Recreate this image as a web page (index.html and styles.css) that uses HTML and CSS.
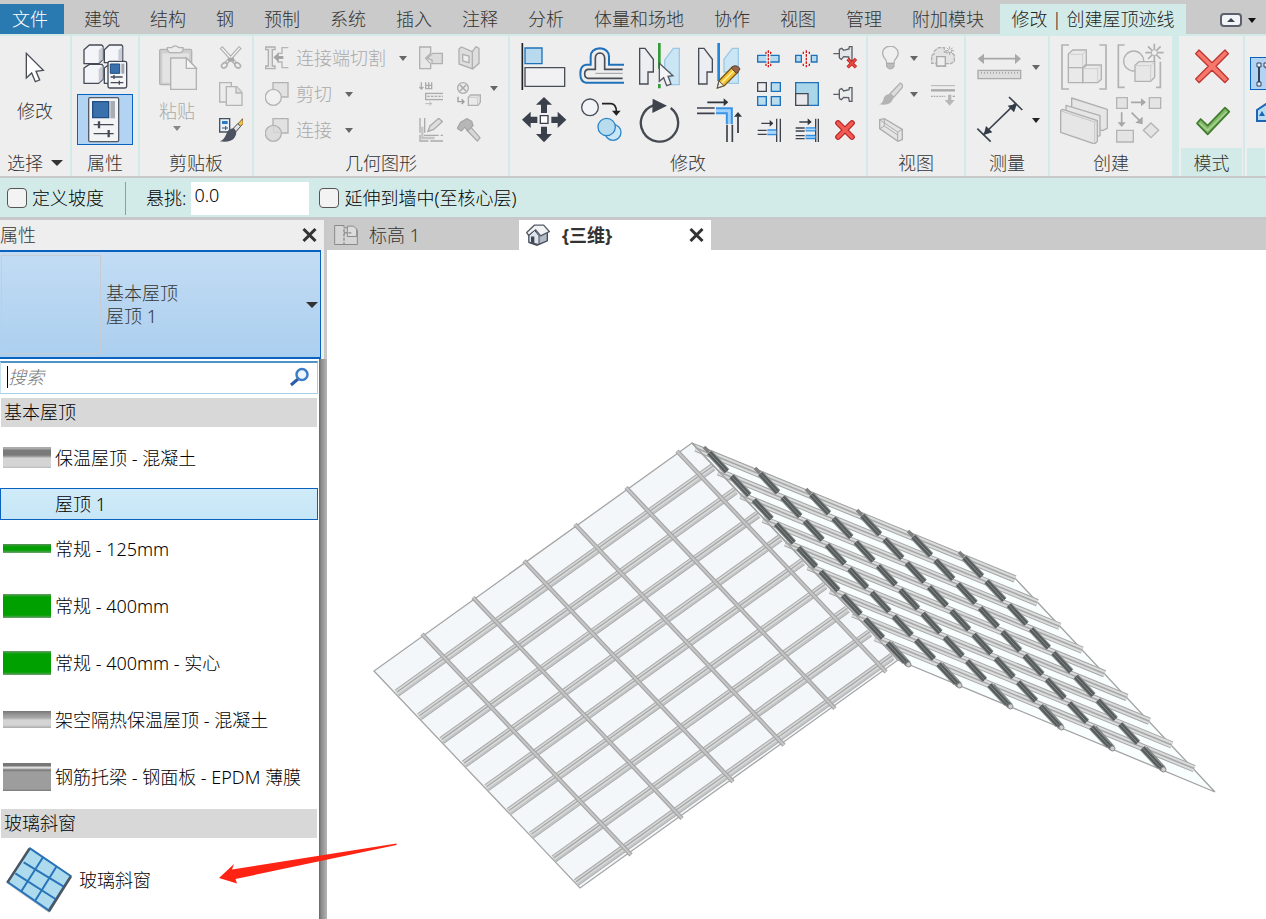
FILE: index.html
```html
<!DOCTYPE html>
<html lang="zh-CN">
<head>
<meta charset="utf-8">
<meta name="viewport" content="width=device-width, initial-scale=1">
<title>修改 | 创建屋顶迹线</title>
<link rel="stylesheet" href="styles.css">
</head>
<body>
<div class="app">
<nav class="tabs">
  <button class="tab tab-file">文件</button>
  <button class="tab">建筑</button>
  <button class="tab">结构</button>
  <button class="tab">钢</button>
  <button class="tab">预制</button>
  <button class="tab">系统</button>
  <button class="tab">插入</button>
  <button class="tab">注释</button>
  <button class="tab">分析</button>
  <button class="tab">体量和场地</button>
  <button class="tab">协作</button>
  <button class="tab">视图</button>
  <button class="tab">管理</button>
  <button class="tab">附加模块</button>
  <button class="tab tab-active">修改 | 创建屋顶迹线</button>
  <button class="collapse" aria-label="最小化功能区">
    <svg width="36" height="14" viewBox="0 0 36 14"><rect x="1" y="1" width="20" height="12" rx="3" fill="#f2f4f8" stroke="#5b606b" stroke-width="2"/><path d="M7 9l4-4 4 4z" fill="#3c4350"/><path d="M28 5h8l-4 5z" fill="#111"/></svg>
  </button>
</nav>

<div class="ribbon">
  <section class="panel p-select">
    <div class="body">
      <button class="big-btn"><svg class="cursor" viewBox="69 147 72 105"><path d="M79 160V234L95 219L106 245L119 240L108 214L130 211Z" fill="#fff" stroke="#4a4d57" stroke-width="4"/></svg>修改</button>
    </div>
    <button class="title">选择<i class="caret caret-lg"></i></button>
  </section>

  <section class="panel p-props">
    <div class="body stack">
      <button class="ico" aria-label="类型属性"><svg class="i48" viewBox="243 129 144 144"><g fill="#f4f5f8" stroke="#454a57" stroke-width="4" stroke-linejoin="round"><path d="M252 149L268 135H305L309 139V178L296 191H252Z"/><path d="M313 149L328 135H365L368 139V188H313Z"/><path d="M252 204L268 193H305L309 197V238L296 250H252Z"/><path d="M313 204L328 193H340V250H313Z"/></g><g fill="#c9ccd5"><path d="M296 151L308 140V178L296 190Z"/><path d="M355 151L367 140V180H355Z"/><path d="M296 207L308 197V238L296 249Z"/></g><rect x="324" y="184" width="56" height="80" rx="5" fill="#f4f5f7" stroke="#454a57" stroke-width="4"/><path d="M331 192h28v28h-28z" fill="#3a70ab" stroke="#214d80" stroke-width="3"/><path d="M364 191h9v30h-9z" fill="#a4a6ac"/><path d="M332 231h36M342 225v12M332 248h38M358 242v12" stroke="#454a57" stroke-width="4"/></svg></button>
      <button class="ico ico-on" aria-label="属性"><svg class="i48" viewBox="243 288 144 144"><rect x="266" y="293" width="90" height="132" rx="4" fill="#f3f4f6" stroke="#555a64" stroke-width="4"/><path d="M278 305h48v48h-48z" fill="#3a70ab" stroke="#214d80" stroke-width="4"/><path d="M331 303h14v52h-14z" fill="#aaacb3"/><path d="M281 374h60M281 401h60" stroke="#454a57" stroke-width="4"/><path d="M297 364v21M326 390v22" stroke="#454a57" stroke-width="7"/></svg></button>
    </div>
    <div class="title">属性</div>
  </section>

  <section class="panel p-clip">
    <div class="body">
      <button class="big-btn off paste"><svg class="i48" viewBox="462 129 144 144"><rect x="482" y="148" width="96" height="106" rx="4" fill="#cfcfcf" stroke="#b2b2b2" stroke-width="4"/><path d="M490 160h80v88h-80z" fill="#e3e3e3"/><path d="M505 151V143H518Q528 132 540 143H552V152L545 158H512Z" fill="#ececec" stroke="#b2b2b2" stroke-width="4"/><path d="M515 174H562L592 205V268H515Z" fill="#ececec" stroke="#b2b2b2" stroke-width="4"/><path d="M562 174V205H592Z" fill="#f6f6f6" stroke="#b2b2b2" stroke-width="4"/></svg>粘贴<i class="caret mute"></i></button>
      <div class="small-grid cols-1">
        <button class="ico" aria-label="剪切到剪贴板"><svg class="i24" viewBox="657 138 72 72"><path d="M663 142L706 190M721 142L678 190" stroke="#b0b0b0" stroke-width="11"/><path d="M665 144L704 187M719 144L680 187" stroke="#f4f4f4" stroke-width="4"/><ellipse cx="673" cy="196" rx="9" ry="7" transform="rotate(-40 673 196)" fill="none" stroke="#b0b0b0" stroke-width="5"/><ellipse cx="713" cy="196" rx="9" ry="7" transform="rotate(40 713 196)" fill="none" stroke="#b0b0b0" stroke-width="5"/><path d="M684 173h18v12h-18z" fill="#a9a9a9"/></svg></button>
        <button class="ico" aria-label="复制到剪贴板"><svg class="i24" viewBox="657 246 72 72"><path d="M659 248H694V306H659Z" fill="#ececec" stroke="#b4b4b4" stroke-width="4"/><path d="M679 260H710L726 277V316H679Z" fill="#ececec" stroke="#b4b4b4" stroke-width="4"/><path d="M708 260V279H726" fill="#ddd" stroke="#b4b4b4" stroke-width="4"/></svg></button>
        <button class="ico" aria-label="匹配类型属性"><svg class="i24" viewBox="657 354 72 72"><path d="M659 356h30v40h-30z" fill="#e5f0fa" stroke="#4a505c" stroke-width="4"/><path d="M666 363h17v9h-17z" fill="#2b7ac4"/><path d="M666 384h18M677 378v12" stroke="#4a505c" stroke-width="3"/><path d="M728 356L700 387L708 394L730 370Z" fill="#f0c24b" stroke="#77602a" stroke-width="3"/><path d="M713 371L697 388L706 397L722 379Z" fill="#dfe2e6" stroke="#555" stroke-width="3"/><path d="M702 385Q684 385 678 404Q672 419 659 424Q690 429 703 414Q711 403 708 394Z" fill="#4c5260"/></svg></button>
      </div>
    </div>
    <div class="title">剪贴板</div>
  </section>

  <section class="panel p-geom">
    <div class="body">
      <div class="rows">
        <button class="row-btn"><svg class="i24" viewBox="45 138 72 72"><path d="M47 141H75V149H67V198H75V206H47V198H55V149H47Z" fill="#e6e6e6" stroke="#b0b0b0" stroke-width="4"/><path d="M115 143H96V160H84V186H96V203H115" fill="none" stroke="#b5b5b5" stroke-width="4"/><path d="M70 172L86 158V168H100V177H86V187Z" fill="#a4a4a4"/></svg>连接端切割<i class="caret"></i></button>
        <button class="row-btn"><svg class="i24" viewBox="45 246 72 72"><path d="M69 248h45v43h-45z" fill="#e2e2e2" stroke="#b2b2b2" stroke-width="4"/><circle cx="70" cy="292" r="24" fill="#f0f0f0" stroke="#b2b2b2" stroke-width="4"/></svg>剪切<i class="caret"></i></button>
        <button class="row-btn"><svg class="i24" viewBox="45 354 72 72"><path d="M69 356h45v43h-45z" fill="#e2e2e2" stroke="#b2b2b2" stroke-width="4"/><circle cx="70" cy="400" r="24" fill="#dcdcdc" stroke="#b2b2b2" stroke-width="4"/><path d="M71 380V397H90" fill="none" stroke="#cfcfcf" stroke-width="3"/></svg>连接<i class="caret"></i></button>
      </div>
      <div class="small-grid cols-2">
        <button class="ico" aria-label="连接屋顶"><svg class="i24" viewBox="507 138 72 72"><path d="M509 141H542V160L527 175L542 191V206H509Z" fill="#e8e8e8" stroke="#b0b0b0" stroke-width="4"/><path d="M577 160V191H546V180L532 175L548 160Z" fill="#dcdcdc" stroke="#b0b0b0" stroke-width="4"/></svg></button>
        <button class="ico" aria-label="墙洞口"><svg class="i24" viewBox="621 138 72 72"><path d="M627 147L634 141L667 155L678 140L687 145V190L668 207L627 192Z" fill="#dedede" stroke="#b0b0b0" stroke-width="4"/><path d="M667 155V206M638 163L657 168V188L638 183Z" fill="#eee" stroke="#b0b0b0" stroke-width="4"/></svg></button>
        <button class="ico" aria-label="梁连接"><svg class="i24" viewBox="507 246 72 72"><path d="M514 247V267M508 261L514 267L520 261M527 247V266H545V247M536 247V266M527 256H545" fill="none" stroke="#ababab" stroke-width="4"/><path d="M579 280H527V299H579" fill="#e9e9e9" stroke="#ababab" stroke-width="4"/><path d="M532 289H579" stroke="#ababab" stroke-width="4" stroke-dasharray="7 4"/><path d="M526 311H545M538 305L545 311L538 317" fill="none" stroke="#bababa" stroke-width="3"/></svg></button>
        <button class="ico" aria-label="拆分面"><svg class="i24" viewBox="621 246 72 72"><circle cx="639" cy="264" r="16" fill="#ececec" stroke="#ababab" stroke-width="4"/><path d="M630 255L648 273M648 255L630 273" stroke="#ababab" stroke-width="5"/><path d="M624 290V305H641M635 298L642 305L635 312" fill="none" stroke="#9c9c9c" stroke-width="4"/><path d="M655 292L662 285H691V307L684 316H655Z" fill="#e9e9e9" stroke="#b0b0b0" stroke-width="4"/><path d="M655 292H683V315M683 292L690 286" fill="none" stroke="#cacaca" stroke-width="3"/></svg></button>
        <button class="ico" aria-label="墙连接"><svg class="i24" viewBox="507 354 72 72"><path d="M510 354V423H579M524 354V406H579" fill="none" stroke="#ababab" stroke-width="4" stroke-dasharray="44 6"/><path d="M517 380V414H554" fill="none" stroke="#c4c4c4" stroke-width="7"/><path d="M534 394L540 378L566 355L577 365L550 389Z" fill="#dedede" stroke="#ababab" stroke-width="4"/></svg></button>
        <button class="ico" aria-label="拆除"><svg class="i24" viewBox="621 354 72 72"><path d="M661 380L690 413L682 423L650 390Z" fill="#d8d8d8" stroke="#ababab" stroke-width="4"/><path d="M622 385L632 367L651 356L665 364L669 377L654 392L644 382L634 393Z" fill="#b7b7b7" stroke="#a6a6a6" stroke-width="4"/></svg></button>
      </div>
      <div class="caret-col"><i class="caret"></i></div>
    </div>
    <div class="title">几何图形</div>
  </section>

  <section class="panel p-modify">
    <div class="body">
      <div class="big-grid cols-4">
        <button class="ico" aria-label="对齐"><svg class="i48" viewBox="30 129 144 144"><path d="M37 129V270" stroke="#222" stroke-width="5"/><path d="M45 144h51v47h-51z" fill="#b7daee" stroke="#1f71ba" stroke-width="4"/><path d="M45 203h119v56h-119z" fill="#f1f1f4" stroke="#4a4e59" stroke-width="4"/></svg></button>
        <button class="ico" aria-label="偏移"><svg class="i48" viewBox="207 129 144 144"><g fill="none"><path d="M342 194H297V170Q296 147 270 145Q242 147 242 170V194H228Q211 196 211 221Q211 246 228 248H342" stroke="#1f71ba" stroke-width="6"/><path d="M338 208H284V174Q283 160 270 159Q256 160 256 174V208H234Q224 210 224 221Q224 233 234 235H338" stroke="#4a4e59" stroke-width="5"/><path d="M256 220H338" stroke="#9a9ca2" stroke-width="3"/></g></svg></button>
        <button class="ico" aria-label="镜像 - 拾取轴"><svg class="i48" viewBox="384 129 144 144"><path d="M389 145H405L430 178V216H414V252H389Z" fill="#eceef2" stroke="#474b56" stroke-width="4"/><path d="M508 145H490L464 180V216H480V254H508Z" fill="#cae6f5" stroke="#9ccae6" stroke-width="4"/><path d="M448 129V206M448 252V265" stroke="#339b3a" stroke-width="8"/><path d="M448 190V244L461 233L470 257L483 252L474 229L489 227Z" fill="#f4f4f6" stroke="#555963" stroke-width="4"/></svg></button>
        <button class="ico" aria-label="镜像 - 绘制轴"><svg class="i48" viewBox="561 129 144 144"><path d="M566 145H582L607 178V216H591V252H566Z" fill="#eceef2" stroke="#474b56" stroke-width="4"/><path d="M685 145H667L642 178V216H657V250H685Z" fill="#cae6f5" stroke="#9ccae6" stroke-width="4"/><path d="M626 129V243" stroke="#2386dd" stroke-width="8"/><path d="M622 264L627 242L667 201L684 216L643 257Z" fill="#f4c334" stroke="#76581d" stroke-width="4"/><path d="M635 249L674 209" stroke="#fff0a0" stroke-width="4"/><path d="M664 204L670 198Q684 195 690 207L680 221Z" fill="#98664a" stroke="#5d3a25" stroke-width="3"/><path d="M622 264L627 243L642 257Z" fill="#f8eed6" stroke="#555" stroke-width="3"/></svg></button>
        <button class="ico" aria-label="移动"><svg class="i48" viewBox="30 288 144 144"><path fill="#3b414c" d="M102 291L126 314H111V339H93V314H78ZM102 427L78 402H93V380H111V402H126ZM36 359L62 335V350H82V369H62V384ZM169 359L143 335V350H124V369H143V384Z"/><path d="M91 347h23v23h-23z" fill="#fff" stroke="#3b414c" stroke-width="4"/></svg></button>
        <button class="ico" aria-label="复制"><svg class="i48" viewBox="207 288 144 144"><circle cx="240" cy="322" r="25" fill="#f3f4f7" stroke="#4a4e59" stroke-width="4"/><path d="M276 311H303Q319 312 319 335" fill="none" stroke="#222" stroke-width="5"/><path d="M306 332H332L319 347Z" fill="#222"/><circle cx="309" cy="397" r="24" fill="#cbe7f7" stroke="#2e86ca" stroke-width="4"/><circle cx="290" cy="381" r="26" fill="#b8dcee" stroke="#2e86ca" stroke-width="4"/></svg></button>
        <button class="ico" aria-label="旋转"><svg class="i48" viewBox="384 288 144 144"><path d="M430 316A56 56 0 1 0 482 324" fill="none" stroke="#454952" stroke-width="7"/><path d="M428 296L471 317L427 339Z" fill="#3d424d"/></svg></button>
        <button class="ico" aria-label="修剪/延伸为角"><svg class="i48" viewBox="561 288 144 144"><path d="M561 324H614M561 340H614M651 374V426M667 374V426" stroke="#3d414c" stroke-width="5"/><path d="M618 332H658V372" fill="none" stroke="#3a94e5" stroke-width="21"/><path d="M618 332H658V372" fill="none" stroke="#9fd2ff" stroke-width="9"/><path d="M592 307H643M684 399V349" stroke="#30343d" stroke-width="5"/><path d="M641 295L655 307L641 319ZM672 350L684 336L696 350Z" fill="#30343d"/></svg></button>
      </div>
      <div class="small-grid cols-3">
        <button class="ico" aria-label="拆分图元"><svg class="i24" viewBox="741 138 72 72"><path d="M743 166h64v20h-64z" fill="#b5daef" stroke="#1f71ba" stroke-width="4"/><path d="M775 151V202" stroke="#eee" stroke-width="12"/><path d="M775 151V202M768 155V162M768 191V198M782 155V162M782 191V198" stroke="#d01c1c" stroke-width="4" stroke-dasharray="8 3"/></svg></button>
        <button class="ico" aria-label="用间隙拆分"><svg class="i24" viewBox="855 138 72 72"><path d="M857 166h17v20h-17zM904 166h17v20h-17z" fill="#b5daef" stroke="#1f71ba" stroke-width="4"/><path d="M889 151V202M880 155V162M880 191V198M898 155V162M898 191V198" stroke="#d01c1c" stroke-width="4" stroke-dasharray="8 3"/></svg></button>
        <button class="ico" aria-label="解锁"><svg class="i24" viewBox="969 138 72 72"><path d="M970 161H987M988 148V174M988 148L995 145L1001 151L1017 147L1018 140H1026V182H1018L1016 171L1001 170L994 178L988 174" fill="#e4e5e8" stroke="#5b5e66" stroke-width="4"/><path d="M1013 177L1038 202M1038 177L1013 202" stroke="#b92222" stroke-width="10"/><path d="M1013 177L1038 202M1038 177L1013 202" stroke="#ee4b43" stroke-width="5"/></svg></button>
        <button class="ico" aria-label="阵列"><svg class="i24" viewBox="741 246 72 72"><path d="M743 248h26v26h-26z" fill="#ededf0" stroke="#444853" stroke-width="4"/><path d="M784 248h27v26h-27zM743 290h26v26h-26zM784 290h27v26h-27z" fill="#b9dcef" stroke="#1f71ba" stroke-width="4"/></svg></button>
        <button class="ico" aria-label="缩放"><svg class="i24" viewBox="855 246 72 72"><path d="M857 248h68v68h-68z" fill="#a9d6e9" stroke="#1f71ba" stroke-width="4"/><path d="M857 281h37v35h-37z" fill="#e9e9ed" stroke="#444853" stroke-width="4"/></svg></button>
        <button class="ico" aria-label="锁定"><svg class="i24" viewBox="969 246 72 72"><path d="M970 283H987M988 269V296M988 269L995 266L1001 273L1017 269L1018 263H1026V304H1018L1016 293L1001 292L994 299L988 296" fill="#eceded" stroke="#5b5e66" stroke-width="4"/></svg></button>
        <button class="ico" aria-label="修剪/延伸单个图元"><svg class="i24" viewBox="741 354 72 72"><path d="M800 356V426M811 356V426M754 370H784M743 391H770M743 403H770" stroke="#3d414c" stroke-width="4"/><path d="M779 360L790 370L779 380Z" fill="#30343d"/><path d="M772 390H799M772 403H799" stroke="#2f8fe4" stroke-width="5"/><path d="M772 397H799" stroke="#a8d7ff" stroke-width="8"/></svg></button>
        <button class="ico" aria-label="修剪/延伸多个图元"><svg class="i24" viewBox="855 354 72 72"><path d="M917 356V426M925 356V426M868 366H898M857 384H884M857 393H884M857 407H884M857 416H884" stroke="#3d414c" stroke-width="4"/><path d="M893 355L905 366L893 376Z" fill="#30343d"/><path d="M887 388H916M887 411H916" stroke="#2f8fe4" stroke-width="13"/><path d="M887 388H916M887 411H916" stroke="#a8d7ff" stroke-width="5"/></svg></button>
        <button class="ico" aria-label="删除"><svg class="i24" viewBox="969 354 72 72"><path d="M984 369L1026 411M1026 369L984 411" stroke="#b62525" stroke-width="17" stroke-linecap="round"/><path d="M984 369L1026 411M1026 369L984 411" stroke="#f25b54" stroke-width="10" stroke-linecap="round"/></svg></button>
      </div>
    </div>
    <div class="title">修改</div>
  </section>

  <section class="panel p-view">
    <div class="body">
      <div class="rows">
        <button class="row-btn tight" aria-label="在视图中隐藏"><svg class="i24" viewBox="57 138 72 72"><path d="M80 190Q80 180 73 174Q64 160 71 148Q79 138 91 138Q105 139 112 150Q118 162 109 174Q102 180 102 190Z" fill="#efefef" stroke="#b0b0b0" stroke-width="4"/><path d="M80 190h22v11q-11 12-22 0z" fill="#bcbcbc" stroke="#a9a9a9" stroke-width="3"/></svg><i class="caret"></i></button>
        <button class="row-btn tight" aria-label="替换视图中的图形"><svg class="i24" viewBox="57 246 72 72"><path d="M121 249Q130 253 127 262L101 292L90 281Z" fill="#dcdcdc" stroke="#b0b0b0" stroke-width="4"/><path d="M89 282Q73 283 70 299Q67 310 57 313Q86 318 96 303Q101 296 100 292Z" fill="#b3b3b3"/></svg><i class="caret"></i></button>
        <button class="row-btn tight" aria-label="选择框"><svg class="i24" viewBox="57 354 72 72"><path d="M59 359L73 356L127 388V419L114 424L59 386Z" fill="#e4e4e4" stroke="#adadad" stroke-width="4"/><path d="M59 359L113 396V423M113 396L127 388M73 357V378L113 405M73 378L60 386" fill="none" stroke="#adadad" stroke-width="3"/></svg></button>
      </div>
      <div class="small-grid cols-1">
        <button class="ico" aria-label="置换图元"><svg class="i24" viewBox="213 138 72 72"><path d="M215 167L223 160V153L236 143H253V156H274L283 166V184L273 191H257V198H229V190H215Z" fill="#e3e3e3" stroke="#b0b0b0" stroke-width="4" stroke-dasharray="12 3"/><path d="M230 170h26v28h-26z" fill="#eee" stroke="#a9a9a9" stroke-width="4"/><path d="M269 139V165M256 152H282M260 143L278 161M278 143L260 161" stroke="#aaa" stroke-width="3"/><circle cx="269" cy="152" r="4" fill="#eee"/></svg></button>
        <button class="ico" aria-label="线处理"><svg class="i24" viewBox="213 246 72 72"><path d="M213 257H285" stroke="#b4b4b4" stroke-width="3"/><path d="M213 271H285" stroke="#aaa" stroke-width="7"/><path d="M213 289H256" stroke="#a8a8a8" stroke-width="4" stroke-dasharray="5 3"/><path d="M264 284h10v16h10l-15 17-15-17h10z" fill="#b7b7b7"/><path d="M278 289h7" stroke="#a8a8a8" stroke-width="4"/></svg></button>
      </div>
    </div>
    <div class="title">视图</div>
  </section>

  <section class="panel p-measure">
    <div class="body stack">
      <button class="row-btn tight" aria-label="测量"><svg class="i48" viewBox="345 129 144 144"><path d="M364 176H470" stroke="#a8a8a8" stroke-width="5"/><path d="M353 176L372 161V192ZM483 176L465 161V192Z" fill="#a8a8a8"/><path d="M354 211h128v25h-128z" fill="#ddd" stroke="#aaa" stroke-width="4"/><path d="M363 218H476" stroke="#aaa" stroke-width="6" stroke-dasharray="3 6"/></svg><i class="caret"></i></button>
      <button class="row-btn tight" aria-label="对齐尺寸标注"><svg class="i48" viewBox="345 288 144 144"><path d="M369 405L466 311" stroke="#3d4350" stroke-width="5"/><path d="M352 386L392 425M447 291L487 330" stroke="#3d4350" stroke-width="5"/><path d="M371 405L378 378L397 397ZM471 312L443 317L462 337Z" fill="#333b48"/></svg><i class="caret dark"></i></button>
    </div>
    <div class="title">测量</div>
  </section>

  <section class="panel p-create">
    <div class="body">
      <div class="big-grid cols-2 wide">
        <button class="ico" aria-label="创建部件"><svg class="i48" viewBox="600 129 144 144"><path d="M627 135H606V267H627M718 135H738V267H718" fill="none" stroke="#b2b2b2" stroke-width="5"/><g fill="#e9e9e9" stroke="#b2b2b2" stroke-width="4"><path d="M625 162L638 150H679V192L668 203H625Z"/><path d="M668 205L681 195H724V238L713 248H668Z"/><path d="M625 203H668V248H625Z"/></g><path d="M628 163H668V201M670 206H713V245M668 163L678 151M713 206L723 196" fill="none" stroke="#cfcfcf" stroke-width="3"/></svg></button>
        <button class="ico" aria-label="创建组"><svg class="i48" viewBox="768 129 144 144"><path d="M794 135H775V262H794M888 262H901V185" fill="none" stroke="#b2b2b2" stroke-width="5"/><circle cx="821" cy="183" r="30" fill="#ececec" stroke="#b2b2b2" stroke-width="4"/><path d="M825 196L837 185H884V232L872 244H825Z" fill="#e7e7e7" stroke="#b2b2b2" stroke-width="4"/><path d="M827 197H872V242M872 197L883 187" fill="none" stroke="#cfcfcf" stroke-width="3"/><path d="M883 131V185M856 158H911M864 139L902 177M902 139L864 177" stroke="#b0b0b0" stroke-width="5"/><circle cx="883" cy="158" r="9" fill="#efefef" stroke="#b0b0b0" stroke-width="3"/></svg></button>
        <button class="ico" aria-label="创建零件"><svg class="i48" viewBox="600 288 144 144"><g fill="#e6e6e6" stroke="#b0b0b0" stroke-width="4" stroke-linejoin="round"><path d="M635 294L742 328V385L727 392L635 358Z"/><path d="M618 316L720 347V407L704 412L618 375Z"/><path d="M602 332L608 328L712 362V424L704 432L602 397Z"/></g><path d="M603 333L704 366V430M704 366L711 363" fill="none" stroke="#c6c6c6" stroke-width="3"/></svg></button>
        <button class="ico" aria-label="创建相似"><svg class="i48" viewBox="768 288 144 144"><g fill="#e4e4e4" stroke="#b4b4b4" stroke-width="4"><path d="M770 293h32v32h-32zM868 293h34v32h-34zM770 391h50v35h-50zM873 369L896 391L873 413L850 391Z"/></g><path d="M813 307H849M785 337V371M815 338L840 363" stroke="#a7a7a7" stroke-width="5"/><path d="M843 295L858 307L843 319ZM773 367H797L785 381ZM826 368L848 350V373Z" fill="#a7a7a7"/></svg></button>
      </div>
    </div>
    <div class="title">创建</div>
  </section>

  <section class="panel p-mode">
    <div class="body stack">
      <button class="ico" aria-label="取消编辑模式"><svg class="i48" viewBox="981 129 144 144"><path d="M1017 150L1056 188L1095 150L1105 161L1068 199L1105 237L1095 248L1056 211L1017 248L1007 237L1045 199L1007 161Z" fill="#f8776c" stroke="#bd3731" stroke-width="4" stroke-linejoin="round"/></svg></button>
      <button class="ico" aria-label="完成编辑模式"><svg class="i48" viewBox="981 288 144 144"><path d="M1011 370L1022 357L1043 377L1095 323L1108 335L1043 403Z" fill="#80b866" stroke="#417b2e" stroke-width="5" stroke-linejoin="round"/><path d="M1018 369L1043 391L1100 335" fill="none" stroke="#a9d594" stroke-width="4"/></svg></button>
    </div>
    <div class="title">模式</div>
  </section>

  <section class="panel p-draw">
    <div class="body stack">
      <button class="draw-btn draw-on" aria-label="边界线"><svg width="48" height="33" viewBox="0 0 48 33"><g fill="none" stroke="#34435a" stroke-width="2"><path d="M8 8V25M15 8L20 25"/><path d="M6 5h4v4h-4zM6 24h4v4h-4zM13 5h4v4h-4z" fill="#e6f2fc" stroke-width="1"/></g></svg></button>
      <button class="draw-btn" aria-label="坡度箭头"><svg width="48" height="33" viewBox="0 0 48 33"><path d="M7 11L16 5H30V22H7Z" fill="#b9dcf5" stroke="#1b67b3" stroke-width="2"/><path d="M9 17L12 12L15 17Z" fill="#1b67b3"/></svg></button>
    </div>
    <div class="title"></div>
  </section>
</div>

<div class="options">
  <label class="check"><input type="checkbox">定义坡度</label>
  <span class="bar"></span>
  <label class="field">悬挑:<input type="text" value="0.0"></label>
  <label class="check"><input type="checkbox">延伸到墙中(至核心层)</label>
</div>

<div class="work">
  <aside class="side">
    <header class="side-head"><h2>属性</h2><button class="close" aria-label="关闭属性"><svg width="15" height="14" viewBox="0 0 15 14"><path d="M1.500 1L13.500 13M13.500 1L1.500 13" stroke="#333" stroke-width="3"/></svg></button></header>
    <button class="type"><span class="thumb"></span><span class="type-text">基本屋顶<br>屋顶 1</span><i class="caret caret-lg"></i></button>
    <div class="drop">
      <label class="search"><input type="text" placeholder="搜索" aria-label="搜索"><svg width="20" height="20" viewBox="0 0 20 20"><path d="M8 12L1 18" stroke="#2c5ba5" stroke-width="3"/><circle cx="12" cy="7.500" r="5.500" fill="#eef6fd" stroke="#3d7dc8" stroke-width="2.500"/></svg></label>
      <h3>基本屋顶</h3>
      <ul>
        <li class="first"><span class="sw sw-ins"></span>保温屋顶 - 混凝土</li>
        <li class="selected"><span class="sw"></span>屋顶 1</li>
        <li><span class="sw sw-thin"></span>常规 - 125mm</li>
        <li><span class="sw sw-green"></span>常规 - 400mm</li>
        <li><span class="sw sw-green"></span>常规 - 400mm - 实心</li>
        <li><span class="sw sw-air"></span>架空隔热保温屋顶 - 混凝土</li>
        <li><span class="sw sw-steel"></span>钢筋托梁 - 钢面板 - EPDM 薄膜</li>
      </ul>
      <h3>玻璃斜窗</h3>
      <ul>
        <li class="glass"><svg width="68" height="68" viewBox="18 976 204 204"><path d="M92 986L216 1068L150 1176L24 1088Z" fill="#6e747c" opacity=".5"/><path d="M93 983L215 1066L149 1169L26 1084Z" fill="#addbed" stroke="#2774bb" stroke-width="6"/><path d="M131 1011L67 1112M172 1038L108 1141M74 1025L198 1100M49 1058L174 1138" stroke="#2774bb" stroke-width="6"/><path d="M91 984L25 1086M216 1067L150 1172" stroke="#4e555f" stroke-width="7"/></svg>玻璃斜窗</li>
      </ul>
    </div>
  </aside>

  <main class="view">
    <div class="view-tabs">
      <button class="vtab"><svg width="24" height="22" viewBox="42 29 72 63"><path d="M44 32H72V39H105L112 46V89H44Z" fill="#d6d6d6" stroke="#8a8a8a" stroke-width="3"/><path d="M82 34H101L110 43V65H82Z" fill="#ddd" stroke="#8a8a8a" stroke-width="3"/><path d="M72 43V89M72 54H97" fill="none" stroke="#8a8a8a" stroke-width="4" stroke-dasharray="9 4"/></svg>标高 1</button>
      <div class="vtab vtab-on"><svg width="24" height="24" viewBox="616 26 72 69"><path d="M625 60V83L649 91L680 78V49L654 39Z" fill="#b2bbc8" stroke="#454c59" stroke-width="4"/><path d="M618 53L641 31L669 31L686 50L660 63L645 45L624 62Z" fill="#f1f2f4" stroke="#555b66" stroke-width="4"/><path d="M625 62L642 47L655 63V89L625 82Z" fill="#dfe5ec" stroke="#454c59" stroke-width="3"/><path d="M631 65h10v20l-10-2z" fill="#3e4653"/></svg><b>{三维}</b><button class="close" aria-label="关闭视图"><svg width="15" height="14" viewBox="0 0 15 14"><path d="M1.500 1L13.500 13M13.500 1L1.500 13" stroke="#333" stroke-width="3"/></svg></button></div>
    </div>
    <svg class="roof" viewBox="327 250 939 669" role="img" aria-label="玻璃屋顶三维视图">
      <defs>
        <g id="slat"><path d="M397 693L713 467" stroke="#a8a8a8" stroke-width="8"/><path d="M397 693L713 467" stroke="#d9dbdb" stroke-width="6"/><path d="M397 692L713 466" stroke="#a8a8a8" stroke-width="1.300"/><path d="M398 695L714 469" stroke="#bfc3c3" stroke-width="1.500"/></g>
        <g id="rafter"><path d="M422 634L631 855" stroke="#a6a6a6" stroke-width="4.400"/><path d="M422 634L631 855" stroke="#c6c6c6" stroke-width="2"/></g>
        <g id="bar"><path d="M696 448L1015 579" stroke="#a6a6a6" stroke-width="7.500"/><path d="M696 448L1015 579" stroke="#dbdddd" stroke-width="5.500"/><path d="M696 448L1015 579" stroke="#a8a8a8" stroke-width="1.600"/></g>
        <g id="fin"><path d="M704 447L709 452" stroke="#808080" stroke-width="3.500"/><path d="M890 644L908 664" stroke="#8a8e8e" stroke-width="6.500"/><path d="M890 644L908 664" stroke="#5c6161" stroke-width="4.500"/><g stroke-dasharray="25.600 7" stroke-dashoffset="-7"><path d="M704.500 447.500L908.500 665.500" stroke="#8f9393" stroke-width="6.800"/><path d="M704.500 447.500L908.500 665.500" stroke="#565b5b" stroke-width="4.800"/><path d="M704.500 447.500L908.500 665.500" stroke="#858989" stroke-width="1"/></g><circle cx="908.500" cy="664.500" r="2.500" fill="#ccc" stroke="#888"/></g>
      </defs>
      <path d="M692 443L374 671L580 888L898 660Z" fill="#f3f7fa" stroke="#a5a5a5" stroke-width="1.300"/>
      <use href="#slat"/><use href="#slat" x="22.400" y="23.700"/><use href="#slat" x="44.800" y="47.400"/><use href="#slat" x="67.200" y="71.100"/><use href="#slat" x="89.600" y="94.800"/><use href="#slat" x="112" y="118.500"/><use href="#slat" x="134.400" y="142.200"/><use href="#slat" x="156.800" y="165.900"/><use href="#slat" x="179.200" y="189.600"/>
      <use href="#rafter"/><use href="#rafter" x="51" y="-36.600"/><use href="#rafter" x="102" y="-73.200"/><use href="#rafter" x="153" y="-109.800"/><use href="#rafter" x="204" y="-146.400"/><use href="#rafter" x="255" y="-183"/>
      <path d="M692 443L1012 575L1215 792L898 660Z" fill="#f8fdfe" stroke="#a2a2a2" stroke-width="1.300"/>
      <use href="#bar"/><use href="#bar" x="22.400" y="23.700"/><use href="#bar" x="44.800" y="47.400"/><use href="#bar" x="67.200" y="71.100"/><use href="#bar" x="89.600" y="94.800"/><use href="#bar" x="112" y="118.500"/><use href="#bar" x="134.400" y="142.200"/><use href="#bar" x="156.800" y="165.900"/><use href="#bar" x="179.200" y="189.600"/>
      <use href="#fin"/><use href="#fin" x="51" y="21"/><use href="#fin" x="102" y="42"/><use href="#fin" x="153" y="63"/><use href="#fin" x="204" y="84"/><use href="#fin" x="255" y="105"/>
      <path d="M692 443L898 660" stroke="#a4a4a4" stroke-width="1.300"/>
    </svg>
  </main>
  <svg class="pointer" width="180" height="42" viewBox="218 843 180 42" aria-hidden="true"><path d="M219 878L234 864L232 869.500L396.500 843.500V845L235.500 879L237 883.500Z" fill="#ff2313"/></svg>
</div>
</div>
</body>
</html>
```

FILE: styles.css
```css
* { box-sizing: border-box; }

body {
  margin: 0;
  font: 18px/24px "Noto Sans", "Noto Sans CJK SC", sans-serif;
  font-weight: 300;
  color: #333;
  background: #fff;
}

.app { min-height: 100vh; display: flex; flex-direction: column; }

button {
  margin: 0; padding: 0; border: 0; background: none;
  font: inherit; color: inherit; white-space: nowrap;
}
svg { display: block; flex: none; }
h2, h3 { margin: 0; font: inherit; }
ul { margin: 0; padding: 0; list-style: none; }

/* Tab strip */
.tabs { display: flex; align-items: stretch; height: 34px; padding-top: 4px; background: #cacaca; }
.tab { padding: 0 15px; line-height: 30px; }
.tab-file { padding: 0 16px 0 12px; margin-right: 5px; background: #2a7ab2; color: #fff; }
.tab-active { width: 186px; padding: 0; margin-left: 1px; background: #d3ebe8; color: #222; }
.collapse { margin: 0 10px 0 auto; padding-top: 2px; }

/* Ribbon */
.ribbon {
  display: flex; gap: 2px; height: 144px; padding-top: 2px;
  background: #d3ebe8; border-bottom: 2px solid #c8c8c8; overflow: hidden;
}
.panel { display: flex; flex-direction: column; flex: none; background: #eee; }
.body { display: flex; height: 112px; }
.title { display: flex; justify-content: center; align-items: center; gap: 8px; height: 28px; padding-top: 2px; }
.stack { flex-direction: column; align-items: center; gap: 5px; padding-top: 7px; }

.p-select { width: 70px; }
.p-select .body { justify-content: center; }
.p-props { width: 66px; }
.p-clip { width: 112px; }
.p-geom { width: 254px; }
.p-modify { width: 356px; }
.p-view { width: 96px; }
.p-measure { width: 82px; }
.p-create { width: 122px; margin-right: 5px; }
.p-mode { width: 64px; }
.p-draw { flex: 1 0 0; min-width: 21px; overflow: hidden; }
.p-mode .title, .p-draw .title { background: #d3ebe8; margin: 0 1px 0 2px; }

.i24 { width: 24px; height: 24px; }
.i48 { width: 48px; height: 48px; }
.cursor { width: 24px; height: 35px; margin-top: 6px; }

.big-btn { display: flex; flex-direction: column; align-items: center; padding-top: 7px; }
.big-btn .i48 { margin-bottom: 8px; }
.big-btn .cursor { margin-bottom: 15px; }
.off { color: #aaa; }
.paste { margin: 0 18px 0 13px; width: 48px; }
.paste .caret { margin-top: 3px; }

.ico { display: flex; align-items: center; justify-content: center; }
.ico-on { width: 56px; height: 51px; margin-top: -2px; background: #b3d3f2; border: 1px solid #0a62c0; }

.small-grid { display: grid; grid-auto-rows: 24px; gap: 12px 14px; padding-top: 10px; align-content: start; }
.big-grid { display: grid; grid-auto-rows: 48px; gap: 5px 11px; padding-top: 7px; align-content: start; }
.big-grid.wide { gap: 5px 8px; }
.cols-1 { grid-template-columns: 24px; }
.small-grid.cols-2 { grid-template-columns: repeat(2, 24px); }
.cols-3 { grid-template-columns: repeat(3, 24px); }
.cols-4 { grid-template-columns: repeat(4, 48px); }
.big-grid.cols-2 { grid-template-columns: repeat(2, 48px); }

.rows { display: flex; flex-direction: column; gap: 12px; padding-top: 10px; }
.row-btn { display: flex; align-items: center; gap: 7px; height: 24px; color: #aaa; }
.row-btn .caret { margin-left: 6px; }
.row-btn.tight .caret { margin-left: 0; }
.p-geom .body { padding-left: 11px; }
.p-geom .rows { width: 154px; }
.caret-col { padding: 55px 0 0 9px; }
.p-modify .body { padding-left: 10px; gap: 12px; }
.p-view .body { padding-left: 11px; }
.p-view .rows { width: 52px; }
.p-measure .body { align-items: flex-start; padding-left: 9px; }
.p-measure .row-btn { height: 48px; gap: 9px; }
.p-create .body { padding-left: 10px; }

.draw-btn { width: 48px; height: 33px; }
.p-draw .body { align-items: flex-start; padding: 21px 0 0 5px; gap: 9px; }
.draw-on { background: #b3d3f2; border: 1px solid #0a62c0; }

.caret {
  width: 0; height: 0; flex: none;
  border: 4px solid transparent; border-top: 5px solid #666; border-bottom: 0;
}
.caret.dark { border-top-color: #222; }
.caret.mute { border-top-color: #888; }
.caret-lg { border-width: 6px; border-top: 6px solid #333; border-bottom: 0; }

/* Options bar */
.options {
  display: flex; align-items: center; height: 42px; padding: 4px 0 3px 7px;
  background: #d3ebe8; border-bottom: 3px solid #c8c8c8; color: #000;
}
.check { display: flex; align-items: center; gap: 5px; }
.check input {
  appearance: none; width: 20px; height: 20px; margin: 0;
  background: #f3f3f3; border: 1px solid #555; border-radius: 4px;
}
.bar { width: 1px; height: 33px; margin: 0 20px 0 21px; background: #999; }
.field { display: flex; align-items: center; gap: 5px; margin-right: 10px; }
.field input {
  width: 118px; height: 33px; padding: 0 3px 6px; border: 0; background: #fff;
  font: inherit; color: inherit;
}

/* Work area */
.work { position: relative; display: flex; flex: 1; background: #fff; }
.side { display: flex; flex-direction: column; width: 327px; flex: none; border-right: 3px solid #c8c8c8; background: #eee; }
.side-head { display: flex; justify-content: space-between; align-items: center; height: 30px; padding-right: 7px; }
.type {
  display: flex; align-items: center; width: 321px; height: 109px; padding: 0 2px 0 1px;
  border: 1px solid #0a62c0; border-width: 2px 1px 2px 0; text-align: left;
  background: linear-gradient(#c3dcf4, #abcfef);
}
.thumb { width: 100px; height: 99px; border: 1px solid #c8ccd2; }
.type-text { flex: 1; padding-left: 5px; line-height: 23px; }
.drop {
  flex: 1; margin-right: -3px; padding: 2px 9px 0 0; color: #000;
  background: linear-gradient(90deg, #fff 319px, #666 319px, #888 321px, #b5b5b5 327px);
}
.search {
  display: flex; align-items: center; height: 33px; padding: 0 7px 2px 6px; background: #fff;
  border: 1px solid #a9cfe6; border-top: 2px solid #4f94c8; border-left: 1px solid #c5e2f2;
}
.search input {
  flex: 1; min-width: 0; height: 22px; padding: 0; border: 0; border-left: 1px solid #000; outline: 0;
  background: none; font: inherit; font-style: italic;
}
.search input::placeholder { color: #777; opacity: 1; }
.drop h3 { height: 29px; margin: 4px 1px 0 1px; padding: 0 3px; line-height: 29px; background: #d8d8d8; }
.drop li { display: flex; align-items: center; gap: 4px; height: 57px; padding-left: 3px; white-space: nowrap; }
.drop li.first { height: 61px; }
.drop li.selected { height: 32px; padding-left: 2px; border: 1px solid #0a62c0; background: linear-gradient(#d0ebf9, #c6e6f6); }
.drop li.glass { height: 81px; gap: 6px; padding: 3px 0 0 5px; }
.sw { flex: none; width: 48px; }
.sw-ins { height: 21px; background: linear-gradient(#aaa 0 2px, #7a7a7a 3px 8px, #aaa 10px, #d4d4d4 11px 19px, #b9b9b9); }
.sw-thin { height: 9px; background: linear-gradient(#5a8f5a, #00a000 3px 6px, #70a070); }
.sw-green { height: 24px; background: linear-gradient(#6d9a6d, #00a000 3px 21px, #70a070); }
.sw-air { height: 17px; background: linear-gradient(#777, #999 4px, #aaa 7px, #d4d4d4 9px 14px, #aaa); }
.sw-steel { height: 28px; background: linear-gradient(#777 0 3px, #ddd 4px 5px, #777 7px, #9d9d9d 9px 26px, #777); }

.view { flex: 1; min-width: 0; }
.view-tabs { display: flex; height: 30px; background: #cacaca; }
.vtab { display: flex; align-items: center; gap: 11px; width: 192px; padding: 0 7px; }
.vtab-on { gap: 12px; background: #fff; }
.vtab-on b { font-weight: 700; }
.vtab-on .close { margin-left: auto; }
.roof { width: 100%; height: auto; fill: none; }
.pointer { position: absolute; left: 218px; top: 623px; }
```
